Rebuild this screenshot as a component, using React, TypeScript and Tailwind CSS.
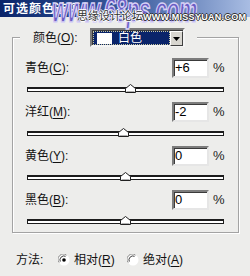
import React from "react";

const FONT = "font-['Liberation_Sans','Noto_Sans_CJK_SC',sans-serif]";

function Thumb({ left }: { left: number }) {
  return (
    <svg className="absolute top-0" style={{ left }} width="11" height="10" viewBox="0 0 11 10">
      <polygon points="0.5,4.5 5.5,0.5 10.5,4.5 10.5,8.5 0.5,8.5" fill="#ffffff" stroke="#202020" strokeWidth="1" />
      <line x1="1.5" y1="7.5" x2="9.5" y2="7.5" stroke="#b0b0b0" strokeWidth="1" />
    </svg>
  );
}

function Slider({ value }: { value: number }) {
  const center = 98 + value * 0.98;
  return (
    <div className="relative ml-[14px] mt-[6px] h-[9px] w-[197px]">
      <div className="absolute left-0 right-0 top-[3px] h-[5px] border border-t-2 border-[#1c1c1c] bg-white" />
      <Thumb left={center - 5.5} />
    </div>
  );
}

function Row({ pre, k, value }: { pre: string; k: string; value: string }) {
  return (
    <div className="flex h-[20px] items-center">
      <div className="ml-[12px] w-[147px] text-[12px] leading-[20px] text-[#111]">
        {pre}(<span className="underline underline-offset-2">{k}</span>):
      </div>
      <div className="h-[20px] w-[37px] border-2 border-t-[#7c7c7c] border-l-[#7c7c7c] border-b-[#e6e6e6] border-r-[#e6e6e6] bg-white pl-[1px] text-[13px] leading-[16px] text-black shadow-[inset_1px_1px_0_#3a3a3a]">
        {value}
      </div>
      <span className="ml-[4px] text-[13px] leading-[20px] text-[#222]">%</span>
    </div>
  );
}

function Radio({ checked }: { checked: boolean }) {
  return (
    <svg width="12" height="12" viewBox="0 0 12 12">
      <circle cx="6" cy="6" r="5.5" fill="#ffffff" />
      <path d="M1.2 8.5 A5.2 5.2 0 0 1 8.5 1.2" fill="none" stroke="#8a8a8a" strokeWidth="1" />
      <path d="M2.3 7.6 A4 4 0 0 1 7.6 2.3" fill="none" stroke="#404040" strokeWidth="1" />
      {checked && <circle cx="6" cy="6" r="1.8" fill="#000" />}
    </svg>
  );
}

export default function App() {
  const rows = [
    { pre: "青色", k: "C", value: "+6", v: 6 },
    { pre: "洋红", k: "M", value: "-2", v: -2 },
    { pre: "黄色", k: "Y", value: "0", v: 0 },
    { pre: "黑色", k: "B", value: "0", v: 0 },
  ];
  return (
    <div className={`relative h-[276px] w-[250px] overflow-hidden bg-[#ededeb] ${FONT}`}>
      {/* title bar */}
      <div className="flex h-[17px] items-center bg-linear-to-r from-[#0a246a] via-[#3a5a9c] to-[#a9bde3] pl-[3px] text-[12px] font-bold tracking-[1px] text-white">
        可选颜色选项
      </div>

      {/* watermark overlay */}
      <div className="pointer-events-none absolute left-[52px] top-[-10px] origin-top scale-y-[1.7] text-[21px] font-black italic leading-[24px] tracking-[-0.5px] text-[#6a5cc2] [-webkit-text-stroke:1px_#d6d0f6]">
        www.68ps.com
      </div>
      <div className="pointer-events-none absolute left-[77px] top-[9px] text-[11px] leading-[14px] text-[#333] [text-shadow:1px_0_0_#fff,-1px_0_0_#fff,0_1px_0_#fff,0_-1px_0_#fff]">
        思缘设计论坛
      </div>
      <div className="pointer-events-none absolute left-[143px] top-[12px] text-[9px] font-bold leading-[10px] tracking-[0.3px] text-white [text-shadow:1px_0_0_#333,-1px_0_0_#333,0_1px_0_#333,0_-1px_0_#333]">
        WWW.MISSYUAN.COM
      </div>

      {/* group box */}
      <div className="ml-[12px] mt-[20px] w-[227px] border border-[#a3a3a3] pb-[7px] shadow-[inset_1px_1px_0_#ffffff,1px_1px_0_#ffffff]">
        <div className="-mt-[10px] ml-[7px] flex w-[177px] items-center bg-[#ededeb] pl-[13px]">
          <div className="w-[57px] text-[12px] text-[#111]">
            颜色(<span className="underline underline-offset-2">O</span>):
          </div>
          <div className="flex h-[19px] w-[95px] border-2 border-t-[#7c7c7c] border-l-[#7c7c7c] border-b-[#f4f4f4] border-r-[#f4f4f4] bg-white shadow-[inset_1px_1px_0_#3a3a3a]">
            <div className="ml-[1px] mt-[1px] flex h-[14px] flex-1 items-center border border-dotted border-[#c8c8a0] bg-[#0a246a] pl-[3px]">
              <div className="h-[11px] w-[15px] bg-white" />
              <span className="ml-[6px] text-[12px] leading-[12px] text-white">白色</span>
            </div>
            <div className="mt-[1px] flex h-[15px] w-[13px] items-center justify-center border border-t-white border-l-white border-b-[#404040] border-r-[#404040] bg-[#d8d6d0]">
              <svg width="7" height="4" viewBox="0 0 7 4">
                <polygon points="0,0 7,0 3.5,4" fill="#000" />
              </svg>
            </div>
          </div>
        </div>

        <div className="mt-[11px] flex flex-col gap-[9px]">
          {rows.map((r) => (
            <div key={r.k}>
              <Row pre={r.pre} k={r.k} value={r.value} />
              <Slider value={r.v} />
            </div>
          ))}
        </div>
      </div>

      {/* method row */}
      <div className="mt-[19px] flex h-[16px] items-center text-[12px] text-[#111]">
        <span className="ml-[16px] w-[42px]">方法:</span>
        <Radio checked />
        <span className="ml-[4px] w-[53px]">
          相对(<span className="underline underline-offset-2">R</span>)
        </span>
        <Radio checked={false} />
        <span className="ml-[4px]">
          绝对(<span className="underline underline-offset-2">A</span>)
        </span>
      </div>
    </div>
  );
}
